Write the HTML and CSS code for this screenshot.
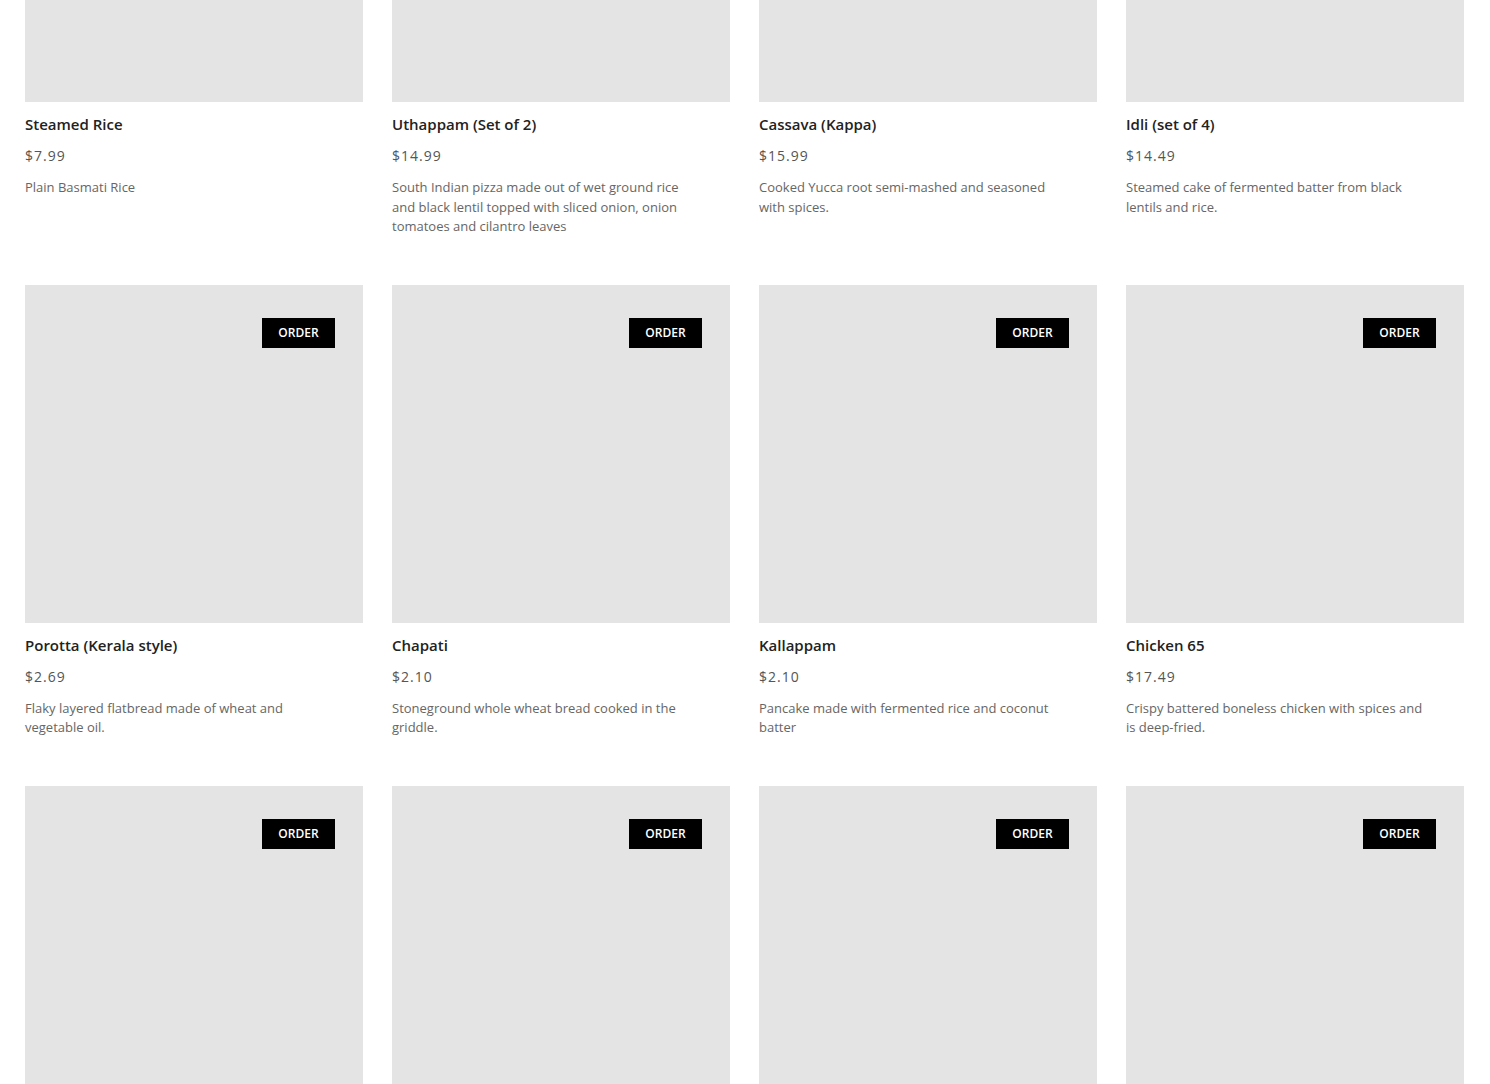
FILE: index.html
```html
<!DOCTYPE html>
<html lang="en">
<head>
    <meta charset="UTF-8">
    <meta name="viewport" content="width=device-width, initial-scale=1.0">
    <title>Menu</title>
    <link rel="stylesheet" href="styles.css">
</head>
<body>
    <div class="menu">
        <div class="item">
            <div class="photo"><button class="order-button">ORDER</button></div>
            <h3 class="name">Steamed Rice</h3>
            <div class="price">$7.99</div>
            <p class="desc">Plain Basmati Rice</p>
        </div>
        <div class="item">
            <div class="photo"><button class="order-button">ORDER</button></div>
            <h3 class="name">Uthappam (Set of 2)</h3>
            <div class="price">$14.99</div>
            <p class="desc">South Indian pizza made out of wet ground rice and black lentil topped with sliced onion, onion tomatoes and cilantro leaves</p>
        </div>
        <div class="item">
            <div class="photo"><button class="order-button">ORDER</button></div>
            <h3 class="name">Cassava (Kappa)</h3>
            <div class="price">$15.99</div>
            <p class="desc">Cooked Yucca root semi-mashed and seasoned with spices.</p>
        </div>
        <div class="item">
            <div class="photo"><button class="order-button">ORDER</button></div>
            <h3 class="name">Idli (set of 4)</h3>
            <div class="price">$14.49</div>
            <p class="desc">Steamed cake of fermented batter from black lentils and rice.</p>
        </div>

        <div class="item">
            <div class="photo"><button class="order-button">ORDER</button></div>
            <h3 class="name">Porotta (Kerala style)</h3>
            <div class="price">$2.69</div>
            <p class="desc">Flaky layered flatbread made of wheat and vegetable oil.</p>
        </div>
        <div class="item">
            <div class="photo"><button class="order-button">ORDER</button></div>
            <h3 class="name">Chapati</h3>
            <div class="price">$2.10</div>
            <p class="desc">Stoneground whole wheat bread cooked in the griddle.</p>
        </div>
        <div class="item">
            <div class="photo"><button class="order-button">ORDER</button></div>
            <h3 class="name">Kallappam</h3>
            <div class="price">$2.10</div>
            <p class="desc">Pancake made with fermented rice and coconut batter</p>
        </div>
        <div class="item">
            <div class="photo"><button class="order-button">ORDER</button></div>
            <h3 class="name">Chicken 65</h3>
            <div class="price">$17.49</div>
            <p class="desc">Crispy battered boneless chicken with spices and is deep-fried.</p>
        </div>

        <div class="item">
            <div class="photo"><button class="order-button">ORDER</button></div>
            <h3 class="name">Chicken Curry</h3>
            <div class="price">$16.99</div>
            <p class="desc">Chicken cooked in a spicy onion and tomato gravy.</p>
        </div>
        <div class="item">
            <div class="photo"><button class="order-button">ORDER</button></div>
            <h3 class="name">Beef Fry</h3>
            <div class="price">$18.99</div>
            <p class="desc">Beef slow roasted with coconut slices and spices.</p>
        </div>
        <div class="item">
            <div class="photo"><button class="order-button">ORDER</button></div>
            <h3 class="name">Fish Curry</h3>
            <div class="price">$17.99</div>
            <p class="desc">Fish cooked in a tangy red chilli gravy.</p>
        </div>
        <div class="item">
            <div class="photo"><button class="order-button">ORDER</button></div>
            <h3 class="name">Vegetable Stew</h3>
            <div class="price">$13.99</div>
            <p class="desc">Mixed vegetables cooked in coconut milk.</p>
        </div>
    </div>
</body>
</html>
```

FILE: styles.css
```css
body {
    margin: 0;
    background-color: #fff;
    font-family: 'Open Sans', 'Liberation Sans', sans-serif;
}

/* page is shown scrolled down into the menu */
.menu {
    display: grid;
    grid-template-columns: repeat(4, 338px);
    column-gap: 29px;
    row-gap: 48px;
    padding: 0 25px;
    margin-top: -236px;
}

.item {
    display: flex;
    flex-direction: column;
}

.photo {
    position: relative;
    height: 338px;
    background-color: #e4e4e4;
}

.order-button {
    position: absolute;
    top: 33px;
    right: 28px;
    width: 73px;
    height: 30px;
    border: none;
    background-color: #000;
    color: #fff;
    font-family: 'Open Sans', 'Liberation Sans', sans-serif;
    font-size: 12px;
    font-weight: 600;
    cursor: pointer;
}

.name {
    margin: 12px 0 0;
    font-size: 15px;
    line-height: 20px;
    font-weight: 600;
    color: #222;
}

.price {
    margin-top: 12px;
    font-size: 14px;
    line-height: 20px;
    letter-spacing: 1px;
    color: #555;
}

.desc {
    margin: 12px 0 0;
    max-width: 90%;
    font-size: 13px;
    line-height: 19.5px;
    color: #666;
}
```
